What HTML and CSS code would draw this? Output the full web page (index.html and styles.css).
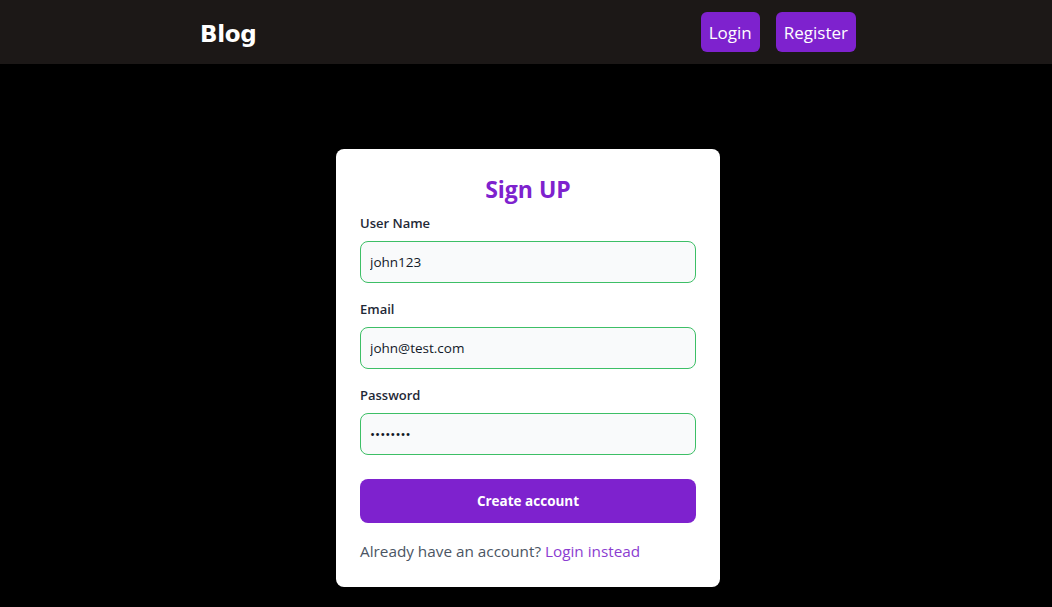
FILE: index.html
```html
<!DOCTYPE html>
<html lang="en">
<head>
<meta charset="utf-8">
<title>Blog - Sign Up</title>
<link rel="stylesheet" href="styles.css">
</head>
<body>
<header class="navbar">
  <div class="nav-inner">
    <a class="brand" href="#">Blog</a>
    <nav class="nav-links">
      <a class="nav-btn" href="#">Login</a>
      <a class="nav-btn" href="#">Register</a>
    </nav>
  </div>
</header>
<main class="main">
  <form class="card">
    <h1 class="title">Sign UP</h1>
    <div class="field">
      <label class="label" for="username">User Name</label>
      <input class="input" id="username" type="text" value="john123">
    </div>
    <div class="field">
      <label class="label" for="email">Email</label>
      <input class="input" id="email" type="email" value="john@test.com">
    </div>
    <div class="field">
      <label class="label" for="password">Password</label>
      <input class="input" id="password" type="password" value="password">
    </div>
    <button class="submit" type="button">Create account</button>
    <p class="alt">Already have an account? <a class="alt-link" href="#">Login instead</a></p>
  </form>
</main>
</body>
</html>
```
FILE: styles.css
```css
* { box-sizing: border-box; }
html, body { margin: 0; padding: 0; }
body {
  background: #000;
  font-family: "Open Sans", "Noto Sans", sans-serif;
  min-height: 607px;
}
.navbar {
  background: #1c1817;
  height: 64px;
  padding-left: 4px;
}
.nav-inner {
  max-width: 656px;
  margin: 0 auto;
  height: 64px;
  display: flex;
  align-items: center;
  justify-content: space-between;
}
.brand {
  font-family: "DejaVu Sans", sans-serif;
  font-weight: 700;
  font-size: 23px;
  letter-spacing: -0.3px;
  color: #fff;
  text-decoration: none;
  margin-top: 4px;
}
.nav-links {
  display: flex;
  gap: 16px;
}
.nav-btn {
  display: flex;
  align-items: center;
  height: 40px;
  padding: 0 8px;
  background: #7e22ce;
  color: #fff;
  border-radius: 6px;
  font-size: 17px;
  text-decoration: none;
}
.main {
  display: flex;
  justify-content: center;
  padding: 85px 0 0 4px;
}
.card {
  width: 384px;
  background: #fff;
  border-radius: 8px;
  padding: 24px;
  margin: 0;
}
.title {
  margin: 0 0 8px;
  text-align: center;
  color: #7e22ce;
  font-size: 23px;
  line-height: 32px;
  font-weight: 700;
}
.field { margin-bottom: 16px; }
.field:nth-of-type(3) { margin-bottom: 24px; }
.label {
  display: block;
  font-size: 13px;
  line-height: 20px;
  font-weight: 600;
  color: #1f2937;
  margin-bottom: 8px;
}
.input {
  display: block;
  width: 100%;
  height: 42px;
  padding: 0 9px;
  border: 1px solid #3dbf66;
  border-radius: 8px;
  background: #f9fafb;
  font-family: inherit;
  font-size: 13.5px;
  color: #111827;
  outline: none;
}
.submit {
  display: block;
  width: 100%;
  height: 44px;
  border: 0;
  border-radius: 8px;
  background: #7e22ce;
  color: #fff;
  font-family: inherit;
  font-size: 13.5px;
  font-weight: 700;
}
.alt {
  margin: 16px 0 0;
  font-size: 15.3px;
  line-height: 24px;
  color: #4b5563;
}
.alt-link {
  color: #8b3dd1;
  text-decoration: none;
}
```
